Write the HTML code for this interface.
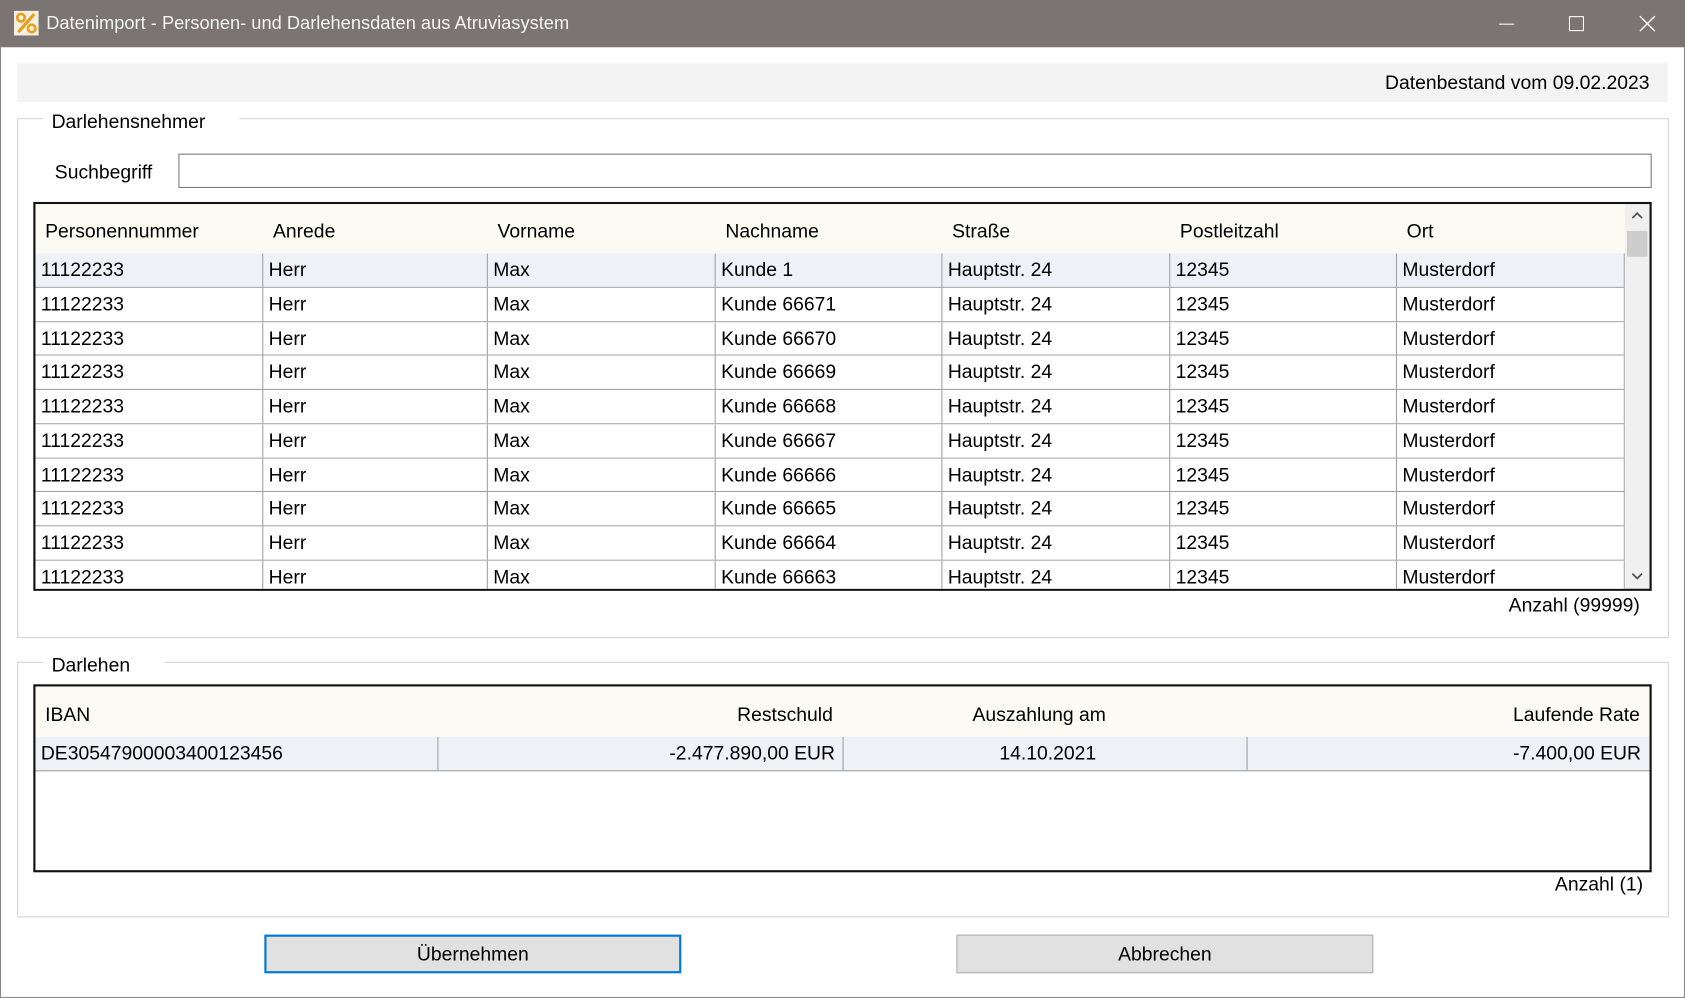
<!DOCTYPE html>
<html><head><meta charset="utf-8"><style>
html,body{margin:0;padding:0;width:1685px;height:998px;overflow:hidden;background:#fff;}
#w{position:absolute;left:0;top:0;width:1568px;height:929px;transform-origin:0 0;transform:scale(1.07462,1.07427);font-family:"Liberation Sans",sans-serif;color:#000;background:#fff;}
.a{position:absolute;}
.t{position:absolute;white-space:nowrap;font-size:18px;line-height:20px;}
.gb{position:absolute;border:1px solid #d5d5d5;}
.gl{position:absolute;background:#fff;padding:0 32px 0 8px;font-size:18px;line-height:20px;}
.grid{position:absolute;border:2px solid #111;background:#fff;overflow:hidden;}
.hdr{position:absolute;left:0;top:0;background:#fbfaf3;}
.row{position:absolute;left:0;height:30.75px;border-bottom:1px solid #a0a0a0;}
.c{position:absolute;top:0;height:31px;border-right:1px solid #a0a0a0;font-size:18px;line-height:30px;padding-left:5px;box-sizing:border-box;white-space:nowrap;}
.btn{position:absolute;background:#e1e1e1;border:1px solid #adadad;font-size:18px;text-align:center;box-sizing:border-box;}
</style></head><body><div id="w">
<div class="a" style="left:0;top:0;width:1568px;height:44px;background:#7a7473;"></div>
<svg class="a" style="left:13px;top:10px" width="23" height="23" viewBox="0 0 23 23"><rect width="23" height="23" fill="#f6f0e0"/><circle cx="6.5" cy="6.5" r="3.5" fill="none" stroke="#e8a020" stroke-width="2.5"/><circle cx="16.5" cy="16.5" r="3.5" fill="none" stroke="#e8a020" stroke-width="2.5"/><line x1="19" y1="3" x2="4" y2="20" stroke="#e8a020" stroke-width="3"/></svg>
<div class="t" style="left:43px;top:12px;color:#f4f4f4;font-size:17px;">Datenimport - Personen- und Darlehensdaten aus Atruviasystem</div>
<div class="a" style="left:1395px;top:22px;width:14px;height:1px;background:#fff;"></div>
<div class="a" style="left:1460px;top:15px;width:12px;height:12px;border:1px solid #fff;"></div>
<svg class="a" style="left:1525px;top:14px" width="16" height="16"><path d="M1 1L15 15M15 1L1 15" stroke="#fff" stroke-width="1.3"/></svg>
<div class="a" style="left:0;top:44px;width:1566px;height:884px;border:1px solid #8a8a8a;border-top:none;"></div>
<div class="a" style="left:16px;top:59px;width:1536px;height:36px;background:#f3f3f3;"></div>
<div class="t" style="right:33px;top:67px;">Datenbestand vom 09.02.2023</div>

<div class="gb" style="left:16px;top:110px;width:1535px;height:482px;"></div>
<div class="gl" style="left:40px;top:103px;">Darlehensnehmer</div>
<div class="t" style="left:51px;top:150px;">Suchbegriff</div>
<div class="a" style="left:166px;top:143px;width:1369px;height:30px;border:1px solid #7a7a7a;"></div>

<div class="grid" style="left:31px;top:188px;width:1502px;height:358px;">
<div class="hdr" style="width:1479px;height:47px;"></div>
<div class="t" style="left:9px;top:15px;">Personennummer</div>
<div class="t" style="left:221px;top:15px;">Anrede</div>
<div class="t" style="left:430px;top:15px;">Vorname</div>
<div class="t" style="left:642px;top:15px;">Nachname</div>
<div class="t" style="left:853px;top:15px;">Straße</div>
<div class="t" style="left:1065px;top:15px;">Postleitzahl</div>
<div class="t" style="left:1276px;top:15px;">Ort</div>
<div id="rows"></div>
<div class="a" style="left:1479px;top:0;width:23px;height:358px;background:#f0f0f0;"></div>
<div class="a" style="left:1481px;top:25px;width:19px;height:24px;background:#cdcdcd;"></div>
<svg class="a" style="left:1484px;top:6px" width="13" height="10"><path d="M2 7L6.5 2.5L11 7" fill="none" stroke="#505050" stroke-width="1.6"/></svg>
<svg class="a" style="left:1484px;top:342px" width="13" height="10"><path d="M2 2L6.5 6.5L11 2" fill="none" stroke="#505050" stroke-width="1.6"/></svg>
</div>
<div class="t" style="right:42px;top:553px;">Anzahl (99999)</div>

<div class="gb" style="left:16px;top:616px;width:1535px;height:236px;"></div>
<div class="gl" style="left:40px;top:609px;">Darlehen</div>
<div class="grid" style="left:31px;top:637px;width:1502px;height:171px;">
<div class="hdr" style="width:1502px;height:47px;"></div>
<div class="t" style="left:9px;top:16px;">IBAN</div>
<div class="t" style="right:760px;top:16px;">Restschuld</div>
<div class="t" style="left:872px;top:16px;">Auszahlung am</div>
<div class="t" style="right:9px;top:16px;">Laufende Rate</div>
<div class="row" style="top:47px;width:1502px;background:#eef1f6;">
<div class="c" style="left:0;width:375px;">DE30547900003400123456</div>
<div class="c" style="left:375px;width:377px;text-align:right;padding-right:7px;">-2.477.890,00 EUR</div>
<div class="c" style="left:752px;width:376px;text-align:center;">14.10.2021</div>
<div class="c" style="left:1128px;width:374px;text-align:right;padding-right:8px;border-right:none;">-7.400,00 EUR</div>
</div>
</div>
<div class="t" style="right:39px;top:813px;">Anzahl (1)</div>

<div class="btn" style="left:246px;top:870px;width:388px;height:36px;border:2px solid #0078d7;line-height:32px;">Übernehmen</div>
<div class="btn" style="left:890px;top:870px;width:388px;height:36px;line-height:34px;">Abbrechen</div>
</div>
<script>
var names=["Kunde 1","Kunde 66671","Kunde 66670","Kunde 66669","Kunde 66668","Kunde 66667","Kunde 66666","Kunde 66665","Kunde 66664","Kunde 66663"];
var xs=[0,212,421,633,844,1056,1267,1479];var h="";
for(var i=0;i<10;i++){var v=["11122233","Herr","Max",names[i],"Hauptstr. 24","12345","Musterdorf"];
h+='<div class="row" style="top:'+(46+i*31.75)+'px;width:1479px;background:'+(i==0?'#eef1f6':'#fff')+'">';
for(var j=0;j<7;j++)h+='<div class="c" style="left:'+xs[j]+'px;width:'+(xs[j+1]-xs[j])+'px">'+v[j]+'</div>';
h+='</div>';}
document.getElementById('rows').innerHTML=h;
</script>
</body></html>
